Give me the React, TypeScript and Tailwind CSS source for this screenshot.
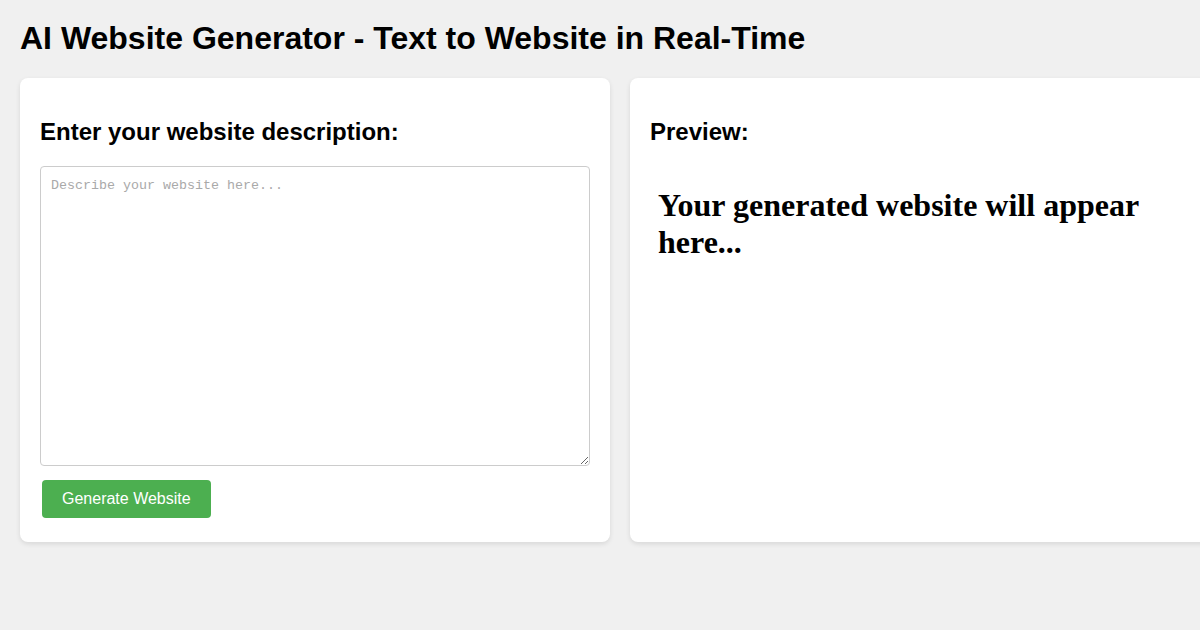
export default function App() {
  return (
    <div
      className="min-h-screen w-full overflow-hidden bg-[#f0f0f0] p-5 text-black"
      style={{ fontFamily: '"Liberation Sans", Arial, sans-serif' }}
    >
      <h1 className="mb-[21px] text-[32px] font-bold leading-[37px]">
        AI Website Generator - Text to Website in Real-Time
      </h1>

      <div className="flex gap-5">
        {/* input panel */}
        <div className="w-[590px] shrink-0 rounded-lg bg-white px-5 pt-5 pb-6 shadow-[0_2px_5px_rgba(0,0,0,0.1)]">
          <h2 className="mt-5 mb-5 text-2xl font-bold leading-7">Enter your website description:</h2>
          <textarea
            className="block h-[300px] w-full rounded border border-[#ccc] p-[10px] text-[13.33px] leading-[17px] placeholder:text-[#a9a9a9] outline-none"
            style={{ fontFamily: '"Liberation Mono", "Courier New", monospace' }}
            placeholder="Describe your website here..."
          />
          <button className="mt-[14px] ml-[2px] rounded bg-[#4caf50] px-5 py-[10px] text-base leading-[18px] text-white">
            Generate Website
          </button>
        </div>

        {/* preview panel */}
        <div className="w-[590px] shrink-0 rounded-lg bg-white p-5 shadow-[0_2px_5px_rgba(0,0,0,0.1)]">
          <h2 className="mt-5 mb-5 text-2xl font-bold leading-7">Preview:</h2>
          <div className="px-2 pt-[21px]">
            <h1
              className="text-[32px] font-bold leading-[37px]"
              style={{ fontFamily: '"Liberation Serif", "Times New Roman", serif' }}
            >
              Your generated website will appear here...
            </h1>
          </div>
        </div>
      </div>
    </div>
  );
}
